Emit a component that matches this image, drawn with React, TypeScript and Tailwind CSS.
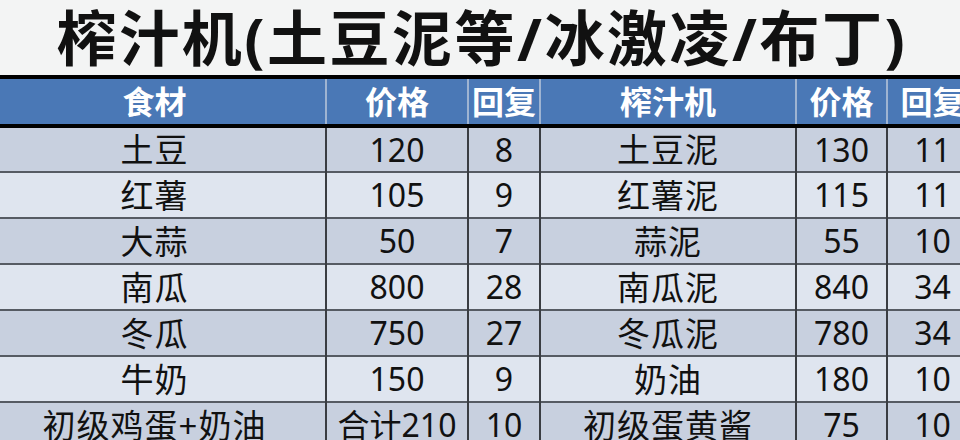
const rows = [
  ["土豆", "120", "8", "土豆泥", "130", "11"],
  ["红薯", "105", "9", "红薯泥", "115", "11"],
  ["大蒜", "50", "7", "蒜泥", "55", "10"],
  ["南瓜", "800", "28", "南瓜泥", "840", "34"],
  ["冬瓜", "750", "27", "冬瓜泥", "780", "34"],
  ["牛奶", "150", "9", "奶油", "180", "10"],
  ["初级鸡蛋+奶油", "合计210", "10", "初级蛋黄酱", "75", "10"],
];

const headers = ["食材", "价格", "回复", "榨汁机", "价格", "回复"];

export default function App() {
  return (
    <div
      className="w-[960px] h-[440px] overflow-hidden bg-[#f3f4f4] text-[#111]"
      style={{ fontFamily: '"Noto Sans", "Noto Sans CJK SC", sans-serif' }}
    >
      {/* Title */}
      <div className="h-[75px] flex items-center justify-center">
        <h1 className="text-[60px] font-bold leading-none tracking-[2.5px] pl-[4px]">
          榨汁机(土豆泥等/冰激凌/布丁)
        </h1>
      </div>

      {/* Table */}
      <table className="-ml-[16px] w-[993px] table-fixed border-collapse">
        <colgroup>
          <col className="w-[342px]" />
          <col className="w-[142px]" />
          <col className="w-[72px]" />
          <col className="w-[256px]" />
          <col className="w-[91px]" />
          <col className="w-[90px]" />
        </colgroup>
        <thead>
          <tr className="h-[49px] bg-[#4a78b6] border-t-4 border-b-4 border-black">
            {headers.map((h, i) => (
              <th
                key={i}
                className={`text-white text-[32px] font-bold leading-none text-center whitespace-nowrap ${
                  i > 0 ? "border-l-2 border-l-[#9fb4d2]" : ""
                }`}
              >
                {h}
              </th>
            ))}
          </tr>
        </thead>
        <tbody>
          {rows.map((r, ri) => (
            <tr
              key={ri}
              className={`h-[46px] border-b-2 border-[#565b63] ${
                ri % 2 === 0 ? "bg-[#c8d0df]" : "bg-[#dfe5ef]"
              }`}
            >
              {r.map((c, ci) => (
                <td
                  key={ci}
                  className={`leading-none text-center whitespace-nowrap text-[#111] ${
                    ci === 0 || ci === 3 ? "text-[33px] tracking-[1px]" : "text-[32px]"
                  } ${ci > 0 ? "border-l-2 border-l-[#3a3d42]" : ""}`}
                >
                  {c}
                </td>
              ))}
            </tr>
          ))}
        </tbody>
      </table>
    </div>
  );
}
